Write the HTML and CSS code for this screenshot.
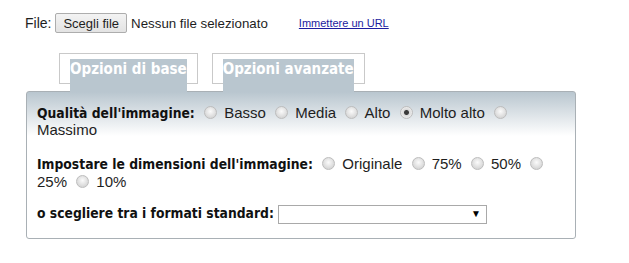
FILE: index.html
```html
<!DOCTYPE html>
<html lang="it">
<head>
	<meta charset="UTF-8">
	<title>Ridimensiona immagine</title>
	<link rel="stylesheet" href="styles.css">
</head>
<body>
	<div class="wrapper">
		<div class="upload">
			<span class="upload-label">File:</span>
			<button class="file-btn" type="button">Scegli file</button>
			<span class="file-name">Nessun file selezionato</span>
			<a class="url-link" href="#">Immettere un URL</a>
		</div>
		<div class="tabs">
			<div class="tab"><span class="tab-label">Opzioni di base</span></div>
			<div class="tab"><span class="tab-label">Opzioni avanzate</span></div>
		</div>
		<div class="panel">
			<p>
				<b>Qualità dell'immagine:</b>
				<input type="radio" name="q"> Basso
				<input type="radio" name="q"> Media
				<input type="radio" name="q"> Alto
				<input type="radio" name="q" checked> Molto alto
				<input type="radio" name="q"> Massimo
			</p>
			<p>
				<b>Impostare le dimensioni dell'immagine:</b>
				<input type="radio" name="d"> Originale
				<input type="radio" name="d"> 75%
				<input type="radio" name="d"> 50%
				<input type="radio" name="d"> 25%
				<input type="radio" name="d"> 10%
			</p>
			<p class="formats-row">
				<b>o scegliere tra i formati standard:</b>
				<span class="select-wrap"><select class="formats"><option></option></select></span>
			</p>
		</div>
	</div>
</body>
</html>
```

FILE: styles.css
```css
body, p {
	margin: 0;
	padding: 0;
}

body {
	background-color: #FFF;
	color: #1E1E1E;
	font-family: "Liberation Sans", Arial, sans-serif;
}

.wrapper {
	padding: 13px 0 0 26px;
}

/* riga file */
.upload {
	display: flex;
	align-items: center;
	height: 20px;
	font-size: 14px;
}

.upload-label {
	margin: 0 4px 0 -1px;
}

.file-btn {
	height: 20px;
	padding: 0 7px;
	border: 1px solid #ADADAD;
	border-radius: 2px;
	background: linear-gradient(#F3F3F3, #E3E3E3);
	font: 13px "Liberation Sans", Arial, sans-serif;
	color: #1E1E1E;
}

.file-name {
	margin-left: 4px;
	font-size: 13.3px;
}

.url-link {
	margin-left: 31px;
	font-size: 11px;
	color: #1C1CA0;
}

/* linguette */
.tabs {
	display: flex;
	gap: 14px;
	margin-top: 20px;
	padding-left: 33px;
}

.tab {
	height: 24px;
	padding: 5px 10px 0;
	border: 1px solid #C9C9C9;
}

.tab-label {
	display: block;
	position: relative;
	z-index: 1;
	height: 32px;
	padding-top: 1px;
	background-color: #B9C6CF;
	color: #FFF;
	font: bold 15px/19px "DejaVu Sans Condensed", "DejaVu Sans", sans-serif;
}

/* pannello */
.panel {
	width: 550px;
	box-sizing: border-box;
	margin-top: 7px;
	padding: 11px 24px 14px 10px;
	border: 1px solid #A9B0B5;
	border-radius: 3px;
	background: linear-gradient(#B9C6CF, #FFF 44px);
	font-size: 15px;
	line-height: 17px;
}

.panel p {
	margin-bottom: 16px;
}

.panel p:last-child {
	margin-bottom: 0;
}

.panel .formats-row {
	margin-top: -2px;
}

.panel b {
	font: bold 13.75px "DejaVu Sans Condensed", "DejaVu Sans", sans-serif;
	color: #111;
}

.panel input[type=radio] {
	-webkit-appearance: none;
	appearance: none;
	width: 13px;
	height: 13px;
	margin: 3px 3px 0 5px;
	vertical-align: -1px;
	border: 1px solid #BDBDBD;
	border-radius: 50%;
	background: radial-gradient(circle at 50% 40%, #FBFBFB, #D8D8D8 70%);
	box-sizing: border-box;
}

.panel input[type=radio]:checked {
	background: radial-gradient(circle, #3A3A3A 0, #3A3A3A 2px, #DADADA 3px, #EFEFEF 6px);
}

.select-wrap {
	display: inline-block;
	position: relative;
	vertical-align: middle;
}

.select-wrap:after {
	content: '\25BC';
	position: absolute;
	right: 6px;
	top: 3px;
	font-size: 10px;
	line-height: 12px;
	color: #000;
	pointer-events: none;
}

.formats {
	-webkit-appearance: none;
	appearance: none;
	display: block;
	width: 209px;
	height: 19px;
	border: 1px solid #A9A9A9;
	border-radius: 0;
	background: #FFF;
}
```
